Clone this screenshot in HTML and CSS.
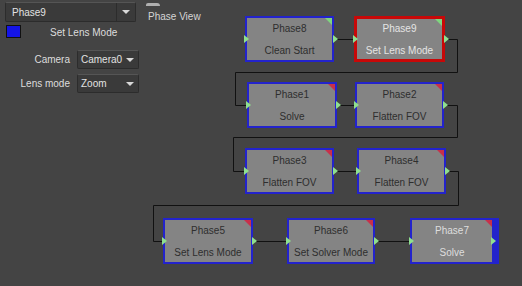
FILE: index.html
```html
<!DOCTYPE html>
<html lang="en">
  <head>
    <meta charset="UTF-8" />
    <title>Phase View</title>
    <link rel="stylesheet" href="styles.css">
  </head>
  <body>
    <div class="app">
      <div class="side">
        <div class="select wide">
          <span class="select-text">Phase9</span>
          <span class="select-btn"><span class="arrow"></span></span>
        </div>
        <div class="current">
          <span class="swatch"></span>
          <span class="current-name">Set Lens Mode</span>
        </div>
        <div class="fields">
          <div class="field">
            <label>Camera</label>
            <div class="select small">
              <span class="select-text">Camera0</span>
              <span class="arrow"></span>
            </div>
          </div>
          <div class="field">
            <label>Lens mode</label>
            <div class="select small">
              <span class="select-text">Zoom</span>
              <span class="arrow"></span>
            </div>
          </div>
        </div>
      </div>

      <div class="view">
        <span class="view-tab"></span>
        <div class="view-title">Phase View</div>

        <svg class="wires" width="380" height="286" viewBox="142 0 380 286">
          <g fill="none" stroke="#111" stroke-width="1">
            <path d="M334 39.5H354" />
            <path d="M445 39.5H457.5V72.5H235.5V105.5H247" />
            <path d="M337 105.5H355" />
            <path d="M444 105.5H457.5V137.5H233.5V171.5H245" />
            <path d="M334 171.5H357" />
            <path d="M446 171.5H458.5V205.5H153.5V241.5H163" />
            <path d="M253 241.5H287" />
            <path d="M375 241.5H410" />
          </g>
        </svg>

        <div class="node done" style="left: 103px; top: 16px; width: 89px">
          <div class="node-name">Phase8</div>
          <div class="node-type">Clean Start</div>
        </div>
        <div class="node done current-node" style="left: 212px; top: 16px; width: 91px">
          <div class="node-name">Phase9</div>
          <div class="node-type">Set Lens Mode</div>
        </div>
        <div class="node" style="left: 105px; top: 82px; width: 90px">
          <div class="node-name">Phase1</div>
          <div class="node-type">Solve</div>
        </div>
        <div class="node" style="left: 213px; top: 82px; width: 89px">
          <div class="node-name">Phase2</div>
          <div class="node-type">Flatten FOV</div>
        </div>
        <div class="node" style="left: 103px; top: 148px; width: 89px">
          <div class="node-name">Phase3</div>
          <div class="node-type">Flatten FOV</div>
        </div>
        <div class="node" style="left: 215px; top: 148px; width: 89px">
          <div class="node-name">Phase4</div>
          <div class="node-type">Flatten FOV</div>
        </div>
        <div class="node" style="left: 21px; top: 218px; width: 90px">
          <div class="node-name">Phase5</div>
          <div class="node-type">Set Lens Mode</div>
        </div>
        <div class="node" style="left: 145px; top: 218px; width: 88px">
          <div class="node-name">Phase6</div>
          <div class="node-type">Set Solver Mode</div>
        </div>
        <div class="node last" style="left: 268px; top: 218px; width: 89px">
          <div class="node-name">Phase7</div>
          <div class="node-type">Solve</div>
        </div>
      </div>
    </div>
  </body>
</html>
```

FILE: styles.css
```css
body {
  margin: 0;
  background-color: #444444;
  font-family: "Liberation Sans", Arial, sans-serif;
  font-size: 10px;
  color: #dddddd;
}
.app {
  display: flex;
  width: 522px;
  height: 286px;
  overflow: hidden;
}
.side {
  width: 142px;
  flex: none;
  padding: 2px 0 0 5px;
  box-sizing: border-box;
}

/* dropdowns */
.select {
  display: flex;
  align-items: center;
  background-color: #3a3a3a;
  border: 1px solid #2c2c2c;
  border-top-color: #555555;
  border-radius: 2px;
  box-sizing: border-box;
  color: #e2e2e2;
}
.select.wide {
  width: 131px;
  height: 20px;
}
.select.small {
  width: 62px;
  height: 19px;
  padding: 0 4px 0 3px;
  justify-content: space-between;
}
.select.wide .select-text {
  flex: 1;
  padding-left: 6px;
}
.select-btn {
  width: 18px;
  height: 100%;
  border-left: 1px solid #2c2c2c;
  display: flex;
  align-items: center;
  justify-content: center;
}
.arrow {
  width: 0;
  height: 0;
  border-left: 4px solid transparent;
  border-right: 4px solid transparent;
  border-top: 4px solid #d8d8d8;
}

.current {
  display: flex;
  align-items: center;
  margin-top: 3px;
  height: 13px;
}
.swatch {
  width: 15px;
  height: 13px;
  background-color: #1414e6;
  border: 1px solid #111;
  box-sizing: border-box;
  margin-left: 1px;
}
.current-name {
  margin-left: 29px;
  margin-top: 1px;
}

.fields {
  display: flex;
  flex-direction: column;
  gap: 5px;
  margin-top: 12px;
}
.field {
  display: flex;
  align-items: center;
}
.field label {
  width: 65px;
  text-align: right;
  padding-right: 7px;
}

/* phase view */
.view {
  position: relative;
  flex: 1;
}
.view-tab {
  position: absolute;
  left: 4px;
  top: 3px;
  width: 14px;
  height: 3px;
  background-color: #b0b0b0;
  border-radius: 2px 3px 0 0;
}
.view-title {
  position: absolute;
  left: 6px;
  top: 11px;
  color: #d4d4d4;
}
.wires {
  position: absolute;
  left: 0;
  top: 0;
}

.node {
  position: absolute;
  height: 46px;
  box-sizing: border-box;
  background-color: #848484;
  border: 2px solid #2323cc;
  color: #2e2e2e;
  text-align: center;
}
.node-name {
  margin-top: 5px;
  line-height: 12px;
}
.node-type {
  margin-top: 10px;
  line-height: 12px;
}
.node::before {
  content: "";
  position: absolute;
  top: 0;
  right: 0;
  border-top: 7px solid #c8304a;
  border-left: 7px solid transparent;
}
.node.done::before {
  border-top-color: #7fd67f;
}
.node::after,
.node .node-name::before {
  content: "";
  position: absolute;
  top: 17px;
  width: 0;
  height: 0;
  border-top: 4px solid transparent;
  border-bottom: 4px solid transparent;
  border-left: 5px solid #8fe08f;
}
.node::after {
  right: -6px;
}
.node .node-name::before {
  left: -3px;
}
.node.current-node {
  border: 3px solid #c80808;
  color: #e4e4e4;
}
.node.current-node::after {
  right: -7px;
  top: 16px;
}
.node.current-node .node-name {
  margin-top: 4px;
}
.node.current-node .node-name::before {
  left: -4px;
  top: 16px;
}
.node.last {
  border-right-width: 7px;
  color: #dedede;
}
.node.last::after {
  right: -4px;
}
```
